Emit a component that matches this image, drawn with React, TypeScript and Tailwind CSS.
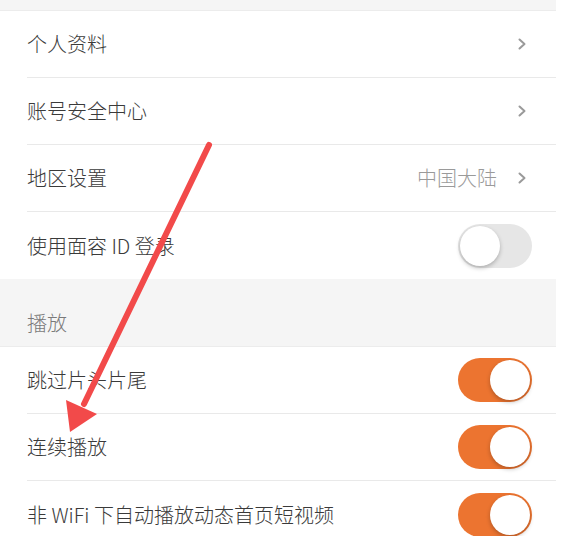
import React from "react";

const font = { fontFamily: '"Noto Sans CJK SC", "Noto Sans", sans-serif' };

function Chevron() {
  return (
    <svg width="10" height="14" viewBox="0 0 10 14" className="mr-[5px]">
      <path d="M2.5 2.5 L7.5 7 L2.5 11.5" fill="none" stroke="#9a9a9a" strokeWidth="2" strokeLinecap="round" strokeLinejoin="round" />
    </svg>
  );
}

function Toggle({ on }: { on: boolean }) {
  return (
    <div
      className={
        on
          ? "w-[74px] h-[44px] rounded-full bg-[#ec7430] p-[2px] flex justify-end"
          : "w-[74px] h-[44px] rounded-full bg-[#e6e6e6] p-[2px] flex justify-start"
      }
    >
      <div className="w-[40px] h-[40px] rounded-full bg-white shadow-[0_2px_4px_rgba(0,0,0,0.25)]" />
    </div>
  );
}

function Row({ label, last, children }: { label: string; last?: boolean; children?: React.ReactNode }) {
  return (
    <div className="bg-white pl-[27px]">
      <div
        className={
          last
            ? "h-[67px] flex items-center justify-between pr-[24px]"
            : "h-[67px] flex items-center justify-between pr-[24px] border-b border-[#e9e9e9]"
        }
      >
        <span className="text-[20px] text-[#3a3a3a] font-light">{label}</span>
        <div className="flex items-center">{children}</div>
      </div>
    </div>
  );
}

function SectionHeader({ title }: { title: string }) {
  return (
    <div className="h-[68px] bg-[#f5f5f5] flex items-end pl-[27px] pb-[8px] border-b border-[#ececec]">
      <span className="text-[20px] text-[#7a7a7a] font-light">{title}</span>
    </div>
  );
}

export default function App() {
  return (
    <div className="relative w-[566px] h-[536px] overflow-hidden bg-white" style={font}>
      <div className="w-[556px] -mt-[57px]">
        <SectionHeader title="账号" />
        <Row label="个人资料">
          <Chevron />
        </Row>
        <Row label="账号安全中心">
          <Chevron />
        </Row>
        <Row label="地区设置">
          <span className="text-[20px] text-[#9a9a9a] font-light mr-[20px]">中国大陆</span>
          <Chevron />
        </Row>
        <Row label="使用面容 ID 登录" last>
          <Toggle on={false} />
        </Row>
        <SectionHeader title="播放" />
        <Row label="跳过片头片尾">
          <Toggle on />
        </Row>
        <Row label="连续播放">
          <Toggle on />
        </Row>
        <Row label="非 WiFi 下自动播放动态首页短视频" last>
          <Toggle on />
        </Row>
      </div>

      <svg className="absolute left-0 top-0 pointer-events-none" width="566" height="536" viewBox="0 0 566 536">
        <line x1="209" y1="145" x2="84" y2="404" stroke="#f24a4a" strokeWidth="6" strokeLinecap="round" />
        <polygon points="70,432 66,400 97,414" fill="#f24a4a" />
      </svg>
    </div>
  );
}
